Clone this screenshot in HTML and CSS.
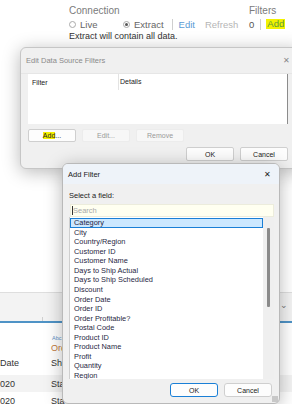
FILE: index.html
```
<!DOCTYPE html>
<html>
<head>
<meta charset="utf-8">
<link rel="stylesheet" href="styles.css">
</head>
<body>
<div class="topbar">
  <div class="conn">
    <div class="label">Connection</div>
    <div class="radio-row">
      <span class="opt live"><span class="radio"></span>Live</span>
      <span class="opt"><span class="radio on"></span>Extract</span>
      <span class="sep"></span>
      <span class="link">Edit</span>
      <span class="muted">Refresh</span>
    </div>
    <div class="note">Extract will contain all data.</div>
  </div>
  <div class="filters">
    <div class="label">Filters</div>
    <div class="radio-row">
      <span class="count">0</span>
      <span class="sep"></span>
      <span class="add-link">Add</span>
    </div>
  </div>
</div>

<div class="table">
  <div class="band head-band"><span class="tick"></span><span class="chev">&#8964;</span></div>
  <div class="blue-line"></div>
  <div class="row-abc"><span class="abc">Abc</span></div>
  <div class="row-ord"><span class="ord">Ord</span></div>
  <div class="row-hdr"><span class="c1">Date</span><span class="c2">Shi</span></div>
  <div class="band row-data"><span class="c1">020</span><span class="c2">Sta</span></div>
  <div class="row-next"><span class="c1">020</span><span class="c2">Sta</span></div>
</div>

<div class="dlg edit-dlg">
  <div class="titlebar"><span class="title">Edit Data Source Filters</span><span class="close">&#10005;</span></div>
  <div class="content">
    <div class="flist">
      <div class="fhead"><span class="fh1">Filter</span><span class="fh2">Details</span></div>
    </div>
    <div class="btnrow">
      <span class="btn"><span class="hl">Add</span>...</span>
      <span class="btn dis">Edit...</span>
      <span class="btn dis">Remove</span>
    </div>
    <div class="okrow">
      <span class="btn ok">OK</span>
      <span class="btn ok">Cancel</span>
    </div>
  </div>
</div>

<div class="dlg add-dlg">
  <div class="titlebar blue"><span class="title dark">Add Filter</span><span class="close dark">&#10005;</span></div>
  <div class="body">
    <div class="sel">Select a field:</div>
    <div class="search"><span class="caret"></span>Search</div>
    <div class="list">
      <div class="items">
        <div class="item selected">Category</div>
        <div class="item">City</div>
        <div class="item">Country/Region</div>
        <div class="item">Customer ID</div>
        <div class="item">Customer Name</div>
        <div class="item">Days to Ship Actual</div>
        <div class="item">Days to Ship Scheduled</div>
        <div class="item">Discount</div>
        <div class="item">Order Date</div>
        <div class="item">Order ID</div>
        <div class="item">Order Profitable?</div>
        <div class="item">Postal Code</div>
        <div class="item">Product ID</div>
        <div class="item">Product Name</div>
        <div class="item">Profit</div>
        <div class="item">Quantity</div>
        <div class="item">Region</div>
      </div>
      <div class="scroll"><div class="thumb"></div></div>
    </div>
    <div class="footer">
      <span class="btn ok2 default">OK</span>
      <span class="btn ok2">Cancel</span>
    </div>
  </div>
  <span class="grip"></span>
</div>
</body>
</html>
```
FILE: styles.css
```
* { box-sizing: border-box; }
html, body { margin: 0; padding: 0; }
body {
  width: 292px;
  height: 404px;
  overflow: hidden;
  position: relative;
  background: #ffffff;
  font-family: "Liberation Sans", Arial, sans-serif;
  color: #222;
}

/* top connection bar */
.topbar {
  display: flex;
  height: 42px;
  padding: 5px 0 0 69px;
}
.conn { width: 180px; }
.label { font-size: 10px; line-height: 12px; color: #7b7b7b; }
.radio-row {
  display: flex;
  align-items: center;
  height: 14px;
  font-size: 9.5px;
  color: #666;
  white-space: nowrap;
}
.opt { display: flex; align-items: center; gap: 4px; }
.opt.live { width: 54px; }
.radio {
  width: 7px; height: 7px;
  border: 1px solid #aaa;
  border-radius: 50%;
  display: inline-flex;
  align-items: center;
  justify-content: center;
}
.radio.on::after {
  content: "";
  width: 3px; height: 3px;
  border-radius: 50%;
  background: #555;
}
.sep { width: 1px; height: 11px; background: #cfcfcf; margin: 0 6px 0 8px; }
.link { color: #5b9bd5; margin-right: 10px; }
.muted { color: #b5b5b5; }
.note { font-size: 9px; line-height: 10px; color: #333; }
.filters { display: flex; flex-direction: column; }
.count { color: #555; }
.filters .sep { margin: 0 5px 0 6px; }
.add-link { color: #5a9a3c; background: #f2f200; padding: 0 1px; line-height: 10px; }

/* underlying table */
.table { margin-top: 250px; position: relative; font-size: 9px; }
.band { background: #f3f3f3; }
.head-band {
  height: 29px;
  border-top: 1px solid #dedede;
  position: relative;
}
.tick { position: absolute; left: 42px; bottom: 0; width: 1px; height: 4px; background: #cfcfcf; }
.chev { position: absolute; left: 280px; top: 7px; color: #777; font-size: 9px; }
.blue-line { height: 2px; background: #4f93c6; }
.row-abc { height: 19px; padding: 10px 0 0 52px; line-height: 8px; }
.abc { font-size: 5.5px; color: #5b8fc7; }
.row-ord { height: 12px; padding: 0 0 0 51px; line-height: 12px; }
.ord { color: #c27a3c; font-size: 9px; }
.row-hdr, .row-data, .row-next { display: flex; height: 17px; align-items: center; color: #333; }
.row-hdr { height: 21px; align-items: flex-start; padding-top: 4px; line-height: 10px; }
.c1 { width: 51px; }

/* dialogs */
.dlg {
  position: absolute;
  background: #f0f0f0;
  border: 1px solid #c6c6c6;
  border-radius: 6px;
  box-shadow: 0 3px 18px rgba(0,0,0,0.28);
  overflow: hidden;
}
.titlebar {
  display: flex;
  align-items: center;
  justify-content: space-between;
}
.title { font-size: 7.5px; color: #8a8a8a; }
.close { font-size: 8px; color: #888; }
.dark { color: #222; }

.edit-dlg { left: 20px; top: 47px; width: 282px; height: 122px; }
.edit-dlg .titlebar { height: 26px; padding: 0 11px 0 5px; border-bottom: 1px solid #e6e6e6; }
.content { padding: 0 7px; width: 274px; }
.flist {
  width: 260px;
  height: 50px;
  background: #fff;
  border-right: 1px solid #8c8c8c;
}
.fhead { display: flex; height: 16px; align-items: center; font-size: 7px; color: #222; }
.fh1 { width: 90px; padding-left: 4px; }
.fh2 { border-left: 1px solid #e3e3e3; height: 16px; line-height: 16px; padding-left: 1px; }
.btnrow { display: flex; gap: 6px; margin-top: 5px; }
.btn {
  display: flex;
  align-items: center;
  justify-content: center;
  width: 48px;
  height: 13px;
  font-size: 7px;
  background: #fdfdfd;
  border: 1px solid #cfcfcf;
  border-radius: 2px;
  color: #222;
}
.btn.dis { background: #f7f7f7; border-color: #ececec; color: #9a9a9a; }
.hl { background: #f5f000; }
.okrow { display: flex; justify-content: flex-end; gap: 6px; margin-top: 5px; width: 260px; }
.btn.ok { height: 14px; }

.add-dlg { left: 62px; top: 163px; width: 218px; height: 241px; border-color: #b9b9b9; }
.titlebar.blue { height: 20px; background: #eef3f9; padding: 0 8px 0 5px; }
.body { padding: 0 6px 0 6px; }
.sel { font-size: 7.5px; line-height: 10px; padding-top: 7px; color: #222; }
.search {
  margin: 3px 0 0 1px;
  width: 204px;
  height: 13px;
  background: #fffff0;
  border: 1px solid #ececdc;
  font-size: 7.5px;
  color: #a9a9a9;
  display: flex;
  align-items: center;
  padding-left: 1px;
}
.caret { width: 1px; height: 9px; background: #333; margin-right: 0; }
.list {
  display: flex;
  width: 205px;
  height: 162px;
  border-left: 1px solid #cfcfcf;
  overflow: hidden;
}
.items { width: 193px; background: #fff; padding-top: 1px; }
.item {
  height: 9.57px;
  line-height: 9.57px;
  font-size: 7.4px;
  padding-left: 4px;
  color: #1f1f3f;
  white-space: nowrap;
}
.item.selected {
  background: #cce8ff;
  border: 1px solid #1a7fd6;
  line-height: 7.5px;
  padding-left: 3px;
}
.scroll { width: 11px; background: #efefef; position: relative; }
.thumb { position: absolute; left: 4px; top: 11px; width: 3px; height: 79px; background: #8a8a8a; border-radius: 1px; }
.footer { display: flex; justify-content: flex-end; gap: 6px; margin-top: 4px; padding-right: 1px; }
.btn.ok2 { width: 48px; height: 14px; border-radius: 3px; }
.btn.default { border-color: #1a7fd6; }
.grip {
  position: absolute;
  right: 1px; bottom: 1px;
  width: 6px; height: 6px;
  background-image: radial-gradient(circle, #999 0.6px, transparent 0.8px);
  background-size: 2px 2px;
}
```
